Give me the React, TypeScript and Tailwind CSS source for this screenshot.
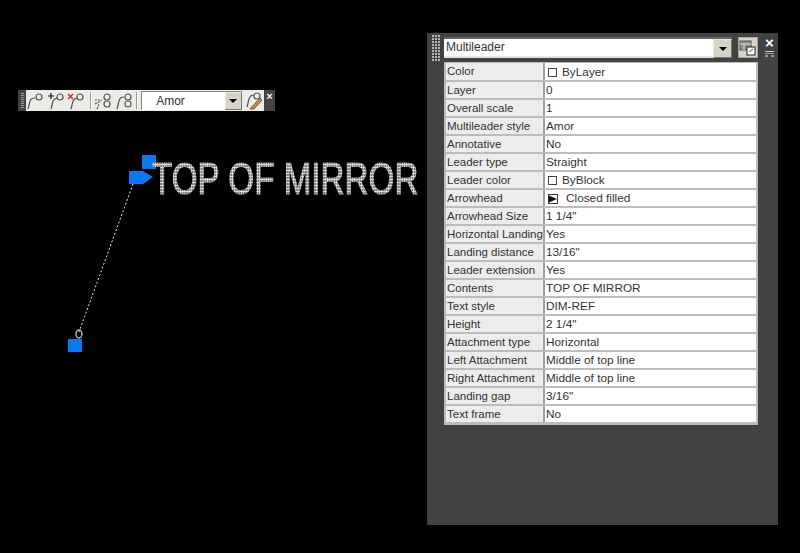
import type { ReactNode } from "react";

const rows: { label: string; value: string; swatch?: "plain" | "arrow" }[] = [
  { label: "Color", value: "ByLayer", swatch: "plain" },
  { label: "Layer", value: "0" },
  { label: "Overall scale", value: "1" },
  { label: "Multileader style", value: "Amor" },
  { label: "Annotative", value: "No" },
  { label: "Leader type", value: "Straight" },
  { label: "Leader color", value: "ByBlock", swatch: "plain" },
  { label: "Arrowhead", value: "Closed filled", swatch: "arrow" },
  { label: "Arrowhead Size", value: '1 1/4"' },
  { label: "Horizontal Landing", value: "Yes" },
  { label: "Landing distance", value: '13/16"' },
  { label: "Leader extension", value: "Yes" },
  { label: "Contents", value: "TOP OF MIRROR" },
  { label: "Text style", value: "DIM-REF" },
  { label: "Height", value: '2 1/4"' },
  { label: "Attachment type", value: "Horizontal" },
  { label: "Left Attachment", value: "Middle of top line" },
  { label: "Right Attachment", value: "Middle of top line" },
  { label: "Landing gap", value: '3/16"' },
  { label: "Text frame", value: "No" },
];

function Grip({ className }: { className: string }) {
  return (
    <div className={`grid grid-cols-3 gap-[1px] ${className}`}>
      {Array.from({ length: 27 }).map((_, i) => (
        <span key={i} className="h-[2px] w-[2px] bg-[#b5b5b5]" />
      ))}
    </div>
  );
}

function DropArrow() {
  return (
    <div className="flex flex-1 items-center justify-center self-stretch border border-t-[#e8e6dc] border-r-[#77766c] border-b-[#77766c] border-l-[#e8e6dc] bg-[#d6d3c8]">
      <span className="h-0 w-0 border-x-[4px] border-t-[4px] border-x-transparent border-t-black" />
    </div>
  );
}

function ToolIcon({ children }: { children: ReactNode }) {
  return (
    <svg width="20" height="20" viewBox="0 0 20 20" fill="none" stroke="#555" strokeWidth="1.2">
      {children}
    </svg>
  );
}

function Toolbar() {
  return (
    <div className="absolute left-[18px] top-[90px] flex h-[21px] w-[257px] items-stretch bg-[#444]">
      <div className="flex w-[8px] items-center justify-center">
        <div className="h-[15px] w-[3px] bg-[repeating-linear-gradient(#999_0_1px,#444_1px_2px)]" />
      </div>
      <div className="flex w-[238px] items-center bg-[#ecebe6]">
        <div className="flex w-[60px] justify-between">
          <ToolIcon>
            <path d="M2 18 4 10Q5 7 9 7" />
            <circle cx="13" cy="6" r="3" />
          </ToolIcon>
          <ToolIcon>
            <path d="M5 18 7 10Q8 8 11 7" />
            <circle cx="14" cy="6" r="3" />
            <path d="M2 5h6M5 2v6" stroke="#111" />
          </ToolIcon>
          <ToolIcon>
            <path d="M5 18 7 10Q8 8 11 7" />
            <circle cx="14" cy="6" r="3" />
            <path d="M2 3l5 5M7 3l-5 5" stroke="#c62828" strokeWidth="1.5" />
          </ToolIcon>
        </div>
        <div className="ml-[4px] h-[17px] w-[2px] border-l border-[#999] bg-white" />
        <div className="ml-[1px] flex w-[43px] justify-between">
          <ToolIcon>
            <path d="M2 9h7M2 13l6-3M4 18l2-5" strokeDasharray="2 1" />
            <circle cx="14" cy="6" r="3" />
            <circle cx="14" cy="13" r="3" />
          </ToolIcon>
          <ToolIcon>
            <path d="M3 18 5 10Q6 6 10 6" />
            <circle cx="14" cy="6" r="3" />
            <circle cx="14" cy="13" r="3" />
          </ToolIcon>
        </div>
        <div className="ml-[2px] h-[17px] w-[2px] border-l border-[#999] bg-white" />
        <div className="ml-[3px] flex h-[19px] w-[105px] items-stretch border-t border-l border-[#888] bg-white">
          <span className="flex-1 pl-[14px] text-[12px] leading-[18px] text-[#333]">Amor</span>
          <div className="flex w-[17px]">
            <DropArrow />
          </div>
        </div>
        <div className="ml-[2px]">
          <svg width="20" height="20" viewBox="0 0 20 20" fill="none">
            <path d="M3 16 5 8Q6 4 10 4" stroke="#555" strokeWidth="1.2" />
            <circle cx="13" cy="5" r="3" stroke="#555" strokeWidth="1.2" />
            <path d="M6 18 16 7l2 2-8 9z" fill="#b98a4e" stroke="#6b4a1f" strokeWidth=".8" />
          </svg>
        </div>
      </div>
      <div className="flex-1 pt-[1px] text-center text-[11px] leading-[10px] font-bold text-white">×</div>
    </div>
  );
}

function Drawing() {
  return (
    <>
      <svg className="absolute left-0 top-0" width="800" height="553" viewBox="0 0 800 553">
        <path d="M133 184 79 332" stroke="#e6e6e6" strokeWidth="1" strokeDasharray="2 2" />
        <ellipse cx="79" cy="334" rx="3" ry="4" fill="none" stroke="#bbb" strokeWidth="1.4" />
        <rect x="142" y="155" width="14" height="14" fill="#0a78ee" />
        <path d="M129 171h14l10 6-10 7h-14z" fill="#0a78ee" />
        <rect x="68" y="339" width="14" height="13" fill="#0a78ee" />
      </svg>
      <div className="absolute left-[152px] top-[154px] origin-left scale-x-[.755] bg-[radial-gradient(circle,#e0e0e0_0_45%,#3a3a3a_80%)] bg-[length:3px_3px] bg-clip-text text-[44px] leading-[50px] whitespace-nowrap text-transparent [-webkit-text-stroke:1.2px_transparent]">
        TOP OF MIRROR
      </div>
    </>
  );
}

function Palette() {
  return (
    <div className="absolute left-[427px] top-[33px] h-[492px] w-[351px] bg-[#424242]">
      <Grip className="absolute left-[5px] top-[2px] w-[8px]" />
      <div className="absolute left-[17px] top-[4px] flex w-[314px] flex-col">
        <div className="flex h-[21px] items-stretch">
          <div className="flex flex-1 items-stretch border-t-2 border-[#666] bg-white">
            <span className="flex-1 border-b-2 border-[#e4e4e4] pl-[2px] text-[12px] leading-[17px] text-[#333]">Multileader</span>
            <div className="flex w-[19px]">
              <DropArrow />
            </div>
          </div>
          <div className="ml-[6px] flex w-[20px] items-center justify-center border border-[#a5a49b] bg-[#d6d3c8]">
            <svg width="18" height="17" viewBox="0 0 18 17">
              <rect x="1" y="2" width="11" height="9" fill="#8f8f88" stroke="#555" />
              <path d="M1 5h11M5 5v6" stroke="#ddd" />
              <rect x="8" y="8" width="8" height="8" fill="#fff" stroke="#222" />
              <path d="M10 13l4-3" stroke="#555" />
            </svg>
          </div>
        </div>
        <div className="mt-[4px] border-2 border-t border-[#bcbcbc] bg-white">
          {rows.map((r) => (
            <div key={r.label} className="flex h-[18px] border-t-2 border-[#bcbcbc] text-[#333] first:h-[17px] first:border-t-0">
              <div className="w-[97px] overflow-hidden bg-[#ececec] pt-[1px] pl-[1px] text-[11.5px] leading-[15px] whitespace-nowrap">{r.label}</div>
              <div className="flex flex-1 items-center border-l-2 border-[#a0a0a0] pt-[1px] pl-[1px] text-[11.8px] leading-[15px] whitespace-nowrap">
                {r.swatch === "plain" && <span className="mr-[5px] ml-[2px] h-[9px] w-[9px] border border-[#444] bg-white" />}
                {r.swatch === "arrow" && (
                  <svg className="mr-[8px] ml-[2px]" width="10" height="10" viewBox="0 0 10 10">
                    <rect x=".5" y=".5" width="9" height="9" fill="#fff" stroke="#333" />
                    <path d="M1 1.5 9 5l-8 3.5z" fill="#111" />
                  </svg>
                )}
                {r.value}
              </div>
            </div>
          ))}
          <div className="h-[1px] bg-[#bcbcbc]" />
        </div>
      </div>
      <div className="absolute left-[337px] top-[3px] flex w-[11px] flex-col items-center">
        <span className="text-[15px] leading-[13px] font-bold text-white">×</span>
        <span className="mt-[2px] h-[1px] w-[9px] bg-[#ccc]" />
        <span className="mt-[1px] h-[1px] w-[9px] bg-[#999]" />
        <span className="mt-[1px] h-[2px] w-[9px] border-x-[3px] border-[#999]" />
      </div>
    </div>
  );
}

export default function App() {
  return (
    <div className="relative h-[553px] w-[800px] overflow-hidden bg-black font-['Liberation_Sans',Arial,sans-serif]">
      <Drawing />
      <Toolbar />
      <Palette />
    </div>
  );
}
